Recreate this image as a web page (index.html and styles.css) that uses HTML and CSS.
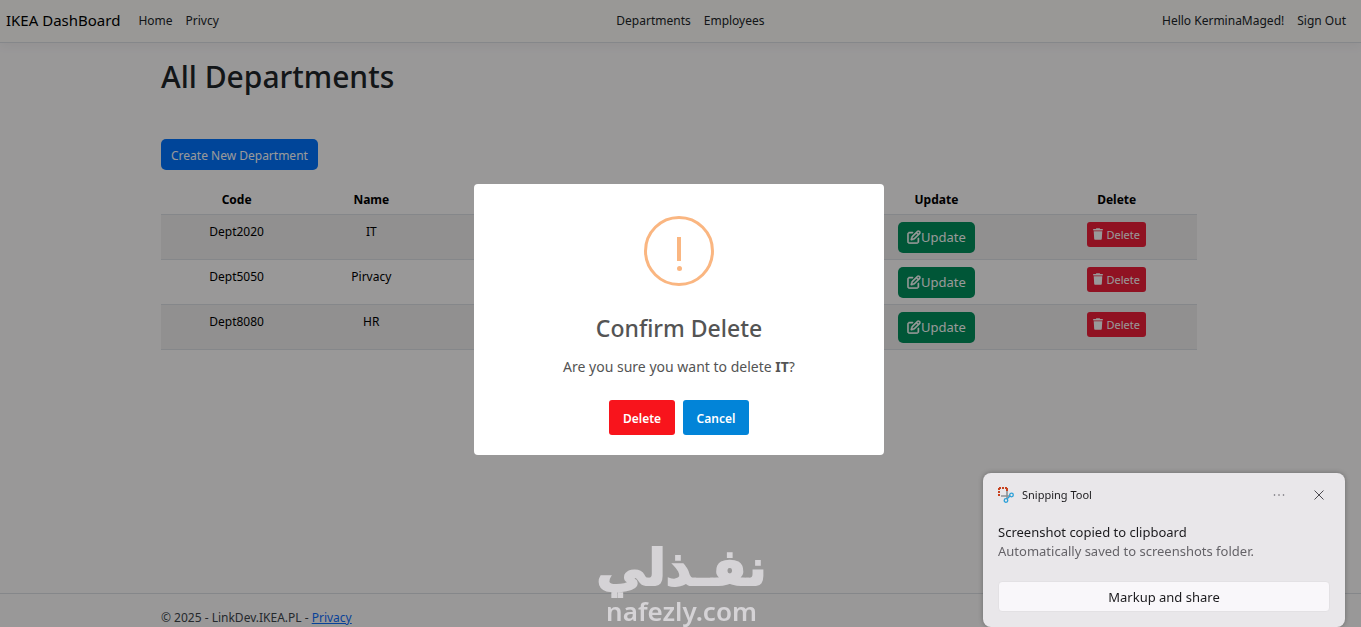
FILE: index.html
```html
<!DOCTYPE html>
<html lang="en">
<head>
<meta charset="utf-8">
<title>All Departments - IKEA DashBoard</title>
<link rel="stylesheet" href="styles.css">
</head>
<body>
<svg class="sprite" aria-hidden="true">
  <symbol id="pen" viewBox="-12 -12 536 536"><path fill="currentColor" stroke="currentColor" stroke-width="18" d="M441 58.900L453.100 71c9.400 9.400 9.400 24.600 0 33.900L424 134.100 377.900 88 407 58.900c9.400-9.400 24.600-9.400 33.900 0zM209.800 256.200L344 121.900 390.100 168 255.800 302.200c-2.900 2.900-6.500 5-10.400 6.100l-58.500 16.700 16.700-58.500c1.100-3.900 3.200-7.500 6.100-10.400zM373.100 25L175.800 222.200c-8.700 8.700-15 19.400-18.300 31.100l-28.600 100c-2.400 8.400-.1 17.400 6.100 23.600s15.200 8.500 23.600 6.100l100-28.600c11.800-3.400 22.500-9.700 31.100-18.300L487 138.900c28.100-28.100 28.100-73.700 0-101.800L474.900 25C446.800-3.100 401.200-3.100 373.100 25zM88 64C39.400 64 0 103.400 0 152V424c0 48.600 39.400 88 88 88H360c48.600 0 88-39.400 88-88V312c0-13.300-10.700-24-24-24s-24 10.700-24 24V424c0 22.100-17.900 40-40 40H88c-22.100 0-40-17.900-40-40V152c0-22.100 17.900-40 40-40H200c13.300 0 24-10.700 24-24s-10.700-24-24-24H88z"/></symbol>
  <symbol id="trash" viewBox="0 0 448 512"><path fill="currentColor" d="M135.200 17.700L128 32H32C14.300 32 0 46.300 0 64S14.300 96 32 96H416c17.700 0 32-14.300 32-32s-14.300-32-32-32H320l-7.200-14.300C307.400 6.800 296.300 0 284.200 0H163.800c-12.100 0-23.200 6.800-28.600 17.700zM416 128H32L53.200 467c1.600 25.300 22.600 45 47.900 45H346.900c25.300 0 46.300-19.700 47.900-45L416 128z"/></symbol>
</svg>

<header class="navbar">
  <div class="nav-group">
    <a class="brand" href="#">IKEA DashBoard</a>
    <a href="#">Home</a>
    <a href="#">Privcy</a>
  </div>
  <nav class="nav-group">
    <a href="#">Departments</a>
    <a href="#">Employees</a>
  </nav>
  <div class="nav-group">
    <a href="#">Hello KerminaMaged!</a>
    <a href="#">Sign Out</a>
  </div>
</header>

<main class="container">
  <h1>All Departments</h1>
  <a class="btn btn-primary" href="#">Create New Department</a>
  <table class="table">
    <colgroup><col class="c-code"><col class="c-name"><col><col class="c-update"><col class="c-delete"></colgroup>
    <thead>
      <tr><th>Code</th><th>Name</th><th></th><th>Update</th><th>Delete</th></tr>
    </thead>
    <tbody>
      <tr><td>Dept2020</td><td>IT</td><td></td>
        <td><a class="btn btn-success" href="#"><svg class="i-pen"><use href="#pen"/></svg>Update</a></td>
        <td><button class="btn btn-danger"><svg class="i-trash"><use href="#trash"/></svg>Delete</button></td></tr>
      <tr><td>Dept5050</td><td>Pirvacy</td><td></td>
        <td><a class="btn btn-success" href="#"><svg class="i-pen"><use href="#pen"/></svg>Update</a></td>
        <td><button class="btn btn-danger"><svg class="i-trash"><use href="#trash"/></svg>Delete</button></td></tr>
      <tr><td>Dept8080</td><td>HR</td><td></td>
        <td><a class="btn btn-success" href="#"><svg class="i-pen"><use href="#pen"/></svg>Update</a></td>
        <td><button class="btn btn-danger"><svg class="i-trash"><use href="#trash"/></svg>Delete</button></td></tr>
    </tbody>
  </table>
</main>

<footer class="footer">
  <div class="container">© 2025 - LinkDev.IKEA.PL - <a href="#">Privacy</a></div>
</footer>

<div class="overlay">
  <div class="modal" role="dialog" aria-labelledby="modal-title">
    <div class="warn"><span class="warn-bar"></span><span class="warn-dot"></span></div>
    <h2 id="modal-title">Confirm Delete</h2>
    <p>Are you sure you want to delete <b>IT</b>?</p>
    <div class="actions">
      <button class="act act-delete">Delete</button>
      <button class="act act-cancel">Cancel</button>
    </div>
  </div>
</div>

<div class="watermark">
  <span class="wm-ar" lang="ar" dir="rtl">نفـذلي</span>
  <span class="wm-en">nafezly.com</span>
</div>

<aside class="toast">
  <div class="toast-head">
    <svg class="i-snip" viewBox="0 0 16 16" fill="none">
      <path d="M1 1h9M1 1v9" stroke="#c8421f" stroke-width="2" stroke-dasharray="2 1"/>
      <path d="M9 1v3" stroke="#c8421f" stroke-width="2"/>
      <path d="M9 4v8M3 9h9" stroke="#8b9297" stroke-width="1.600"/>
      <circle cx="13.500" cy="8" r="1.800" stroke="#2ba0d8" stroke-width="1.300"/>
      <circle cx="8" cy="13.500" r="1.800" stroke="#2ba0d8" stroke-width="1.300"/>
      <path d="M12 9l-2.500 2.500" stroke="#2ba0d8" stroke-width="1.300"/>
    </svg>
    <span class="toast-app">Snipping Tool</span>
    <button class="icon-btn" aria-label="More options"><svg viewBox="0 0 12 12" fill="#66646a"><circle cx="1.500" cy="6" r=".8"/><circle cx="6" cy="6" r=".8"/><circle cx="10.500" cy="6" r=".8"/></svg></button>
    <button class="icon-btn" aria-label="Close"><svg viewBox="0 0 12 12" fill="none" stroke="#4c4a50"><path d="M1.500 1.500l9 9M10.500 1.500l-9 9"/></svg></button>
  </div>
  <div class="toast-body">
    <strong>Screenshot copied to clipboard</strong>
    <span>Automatically saved to screenshots folder.</span>
  </div>
  <button class="toast-action">Markup and share</button>
</aside>
</body>
</html>
```
FILE: styles.css
```css
* { box-sizing: border-box; }
body {
  margin: 0;
  min-height: 100vh;
  display: flex;
  flex-direction: column;
  background: #fffdfe;
  color: #212529;
  font: 12px/20px "Noto Sans", "Open Sans", sans-serif;
}
button { font-family: inherit; }
.sprite { display: none; }

.navbar {
  display: flex;
  justify-content: space-between;
  align-items: center;
  height: 43px;
  padding: 0 15px 0 6px;
  background: #fffefa;
  border-bottom: 1px solid #dee2e6;
  box-shadow: 0 3px 10px rgba(0, 0, 0, .05);
}
.nav-group { display: flex; align-items: center; gap: 13px; }
.nav-group a { color: #212529; text-decoration: none; }
.nav-group .brand { margin-right: 5px; padding-bottom: 2px; font-size: 15px; color: #000; }

.container { width: 100%; max-width: 1039px; margin: 0 auto; padding-right: 3px; }
main.container { flex: 1; }
h1 { margin: 14px 0 42px; font-size: 30px; line-height: 40px; font-weight: 500; }

.btn {
  display: inline-flex;
  align-items: center;
  border: 0;
  border-radius: 5px;
  color: #fff;
  text-decoration: none;
}
.btn-primary { height: 31px; padding: 2px 10px 0; background: #0074ff; }
.btn-success { height: 31px; padding: 0 9px; font-size: 13px; background: #00905c; }
.btn-danger { height: 25px; padding: 0 6px; gap: 3px; font-size: 11px; border-radius: 3px; background: #f01e3a; }
.i-pen { width: 14px; height: 14px; }
.i-trash { width: 10px; height: 12px; }

.table { width: 100%; margin-top: 14px; border-collapse: collapse; table-layout: fixed; text-align: center; color: #000; }
.c-code { width: 14.600%; }
.c-name { width: 11.400%; }
.c-update { width: 19.300%; }
.c-delete { width: 15.500%; }
.table th { height: 30px; padding: 2px 0 0; font-weight: 700; border-bottom: 1px solid #dee2e6; }
.table td { height: 45px; padding: 7px 0 6px; vertical-align: top; border-bottom: 1px solid #dee2e6; }
.table tbody tr:nth-child(odd) { background: #f2f0f1; }

.footer { border-top: 1px solid #dee2e6; padding-top: 15px; line-height: 18px; color: #40464c; }
.footer a { color: #0d6efd; }

.overlay {
  position: fixed;
  inset: 0;
  display: flex;
  align-items: center;
  justify-content: center;
  padding: 12px 3px 0 0;
  background: rgba(0, 0, 0, .4);
}
.modal {
  display: flex;
  flex-direction: column;
  align-items: center;
  width: 410px;
  padding: 32px 16px 20px;
  border-radius: 4px;
  background: #fff;
  color: #545454;
}
.warn {
  display: flex;
  flex-direction: column;
  align-items: center;
  gap: 5px;
  width: 70px;
  height: 70px;
  padding-top: 18px;
  border: 3px solid #fab681;
  border-radius: 50%;
}
.warn-bar { width: 4px; height: 24px; background: #fab681; }
.warn-dot { width: 5px; height: 5px; border-radius: 50%; background: #fab681; }
.modal h2 { margin: 26px 0 13px; font-size: 23px; line-height: 32px; font-weight: 500; }
.modal p { margin: 0 0 23px; font-size: 14px; line-height: 20px; }
.actions { display: flex; gap: 8px; }
.act { width: 66px; height: 35px; padding: 2px 0 0; border: 0; border-radius: 3px; color: #fff; font-size: 12px; font-weight: 600; }
.act-delete { background: #f8141c; }
.act-cancel { background: #0284d8; }

.watermark {
  position: fixed;
  left: 50%;
  bottom: 0;
  width: 170px;
  margin-left: -84px;
  display: flex;
  flex-direction: column;
  align-items: center;
  color: #d5d3d6;
}
.wm-ar { font: 700 50px/54px "DejaVu Sans", sans-serif; -webkit-text-stroke: 2px #d5d3d6; }
.wm-en { font: 600 26px/32px "Noto Sans", sans-serif; }

.toast {
  position: fixed;
  right: 16px;
  bottom: 0;
  width: 362px;
  padding: 12px 15px 15px;
  border-radius: 8px;
  background: #e9e7ea;
  color: #1b1a1d;
  box-shadow: 0 0 5px rgba(0, 0, 0, .3);
}
.toast-head { display: flex; align-items: center; }
.i-snip { width: 16px; height: 16px; margin-right: 8px; }
.toast-app { flex: 1; font-size: 11px; }
.icon-btn { display: flex; margin-left: 20px; padding: 4px; border: 0; background: none; }
.icon-btn + .icon-btn { margin-right: 1px; }
.icon-btn svg { width: 12px; height: 12px; }
.toast-body { display: flex; flex-direction: column; margin: 18px 0 20px; font-size: 13px; line-height: 19px; }
.toast-body strong { font-weight: 400; }
.toast-body span { color: #656368; }
.toast-action { display: block; width: 100%; height: 31px; padding: 0; border: 1px solid #e3e1e4; border-radius: 4px; background: #f9f7fa; color: #1b1a1d; font-size: 13px; }
```
